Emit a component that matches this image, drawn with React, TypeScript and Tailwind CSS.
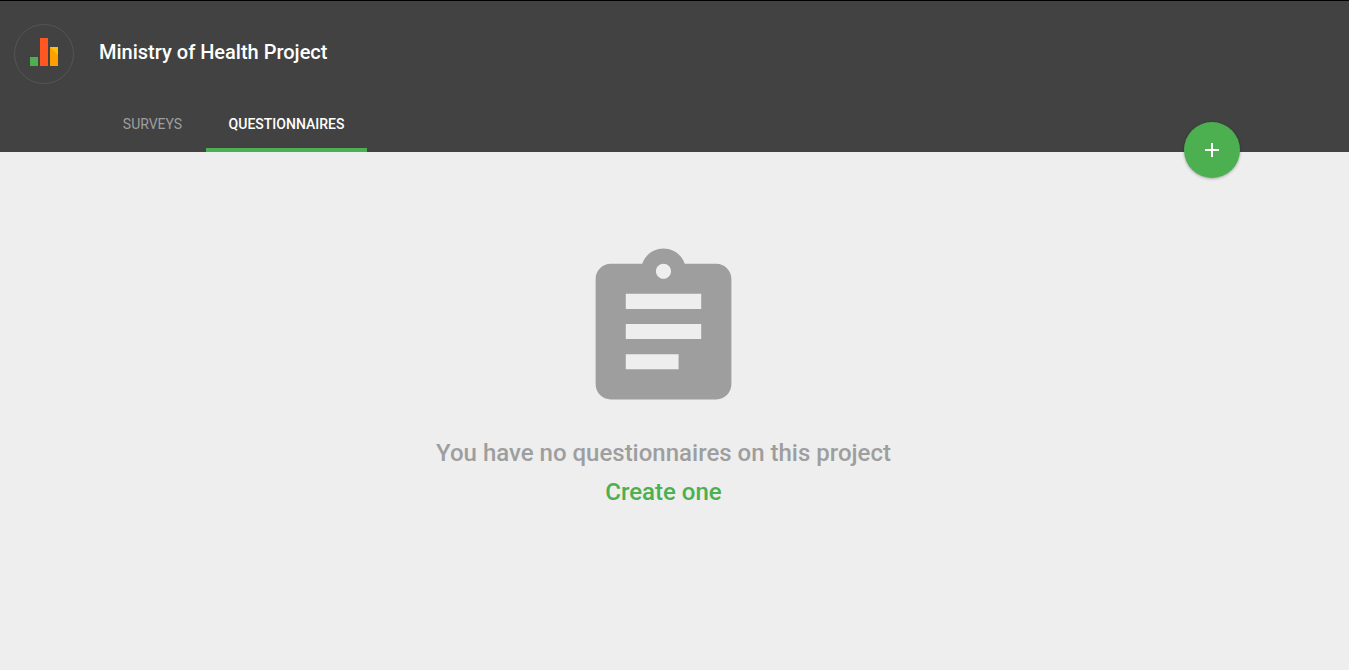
function Logo() {
  return (
    <a href="#" aria-label="Home" className="flex size-[60px] items-center justify-center rounded-full border border-[#555555] pb-1">
      <svg width="28" height="28" viewBox="0 0 28 28" aria-hidden="true">
        <path fill="#4caf50" d="M0 19h8v9H0z" />
        <path fill="#ff5722" d="M10 0h8v28h-8z" />
        <path fill="#ffa000" d="M20 9h8v19h-8z" />
        <path fill="#ffc107" d="M20 9h8v8z" />
      </svg>
    </a>
  );
}

function AssignmentIcon() {
  return (
    <svg viewBox="0 0 24 24" fill="currentColor" className="size-[181px]" aria-hidden="true">
      <path d="M19 3h-4.18C14.4 1.84 13.3 1 12 1c-1.3 0-2.4.84-2.82 2H5c-1.1 0-2 .9-2 2v14c0 1.1.9 2 2 2h14c1.1 0 2-.9 2-2V5c0-1.1-.9-2-2-2zm-7 0c.55 0 1 .45 1 1s-.45 1-1 1-1-.45-1-1 .45-1 1-1zm2 14H7v-2h7v2zm3-4H7v-2h10v2zm0-4H7V7h10v2z" />
    </svg>
  );
}

export default function App() {
  return (
    <div className="min-h-screen bg-[#eeeeee] font-['Roboto',sans-serif]">
      <header className="relative border-t border-black bg-[#424242]">
        <div className="flex items-center gap-[25px] px-3.5 pt-[23px]">
          <Logo />
          <h1 className="pb-1 text-xl font-medium text-white">Ministry of Health Project</h1>
        </div>
        <nav className="mt-3 flex pl-[99px] text-center text-sm uppercase">
          <a href="#" className="w-[107px] border-b-4 border-transparent pt-[18px] pb-[14px] text-[#9e9e9e]">Surveys</a>
          <a href="#" aria-current="page" className="w-[161px] border-b-4 border-[#4caf50] pt-[18px] pb-[14px] font-medium text-white">Questionnaires</a>
        </nav>
        <button
          type="button"
          aria-label="Add questionnaire"
          className="absolute right-[109px] -bottom-[26px] flex size-14 items-center justify-center rounded-full bg-[#4caf50] text-white shadow-[0_1px_3px_rgba(0,0,0,0.3)]"
        >
          <svg viewBox="0 0 24 24" fill="currentColor" className="size-6" aria-hidden="true">
            <path d="M19 13h-6v6h-2v-6H5v-2h6V5h2v6h6v2z" />
          </svg>
        </button>
      </header>
      <main className="flex flex-col items-center pt-[89px] pr-[22px] text-center text-2xl leading-[39px] font-medium text-[#9e9e9e]">
        <AssignmentIcon />
        <p className="mt-3">You have no questionnaires on this project</p>
        <a href="#" className="text-[#4caf50]">Create one</a>
      </main>
    </div>
  );
}
